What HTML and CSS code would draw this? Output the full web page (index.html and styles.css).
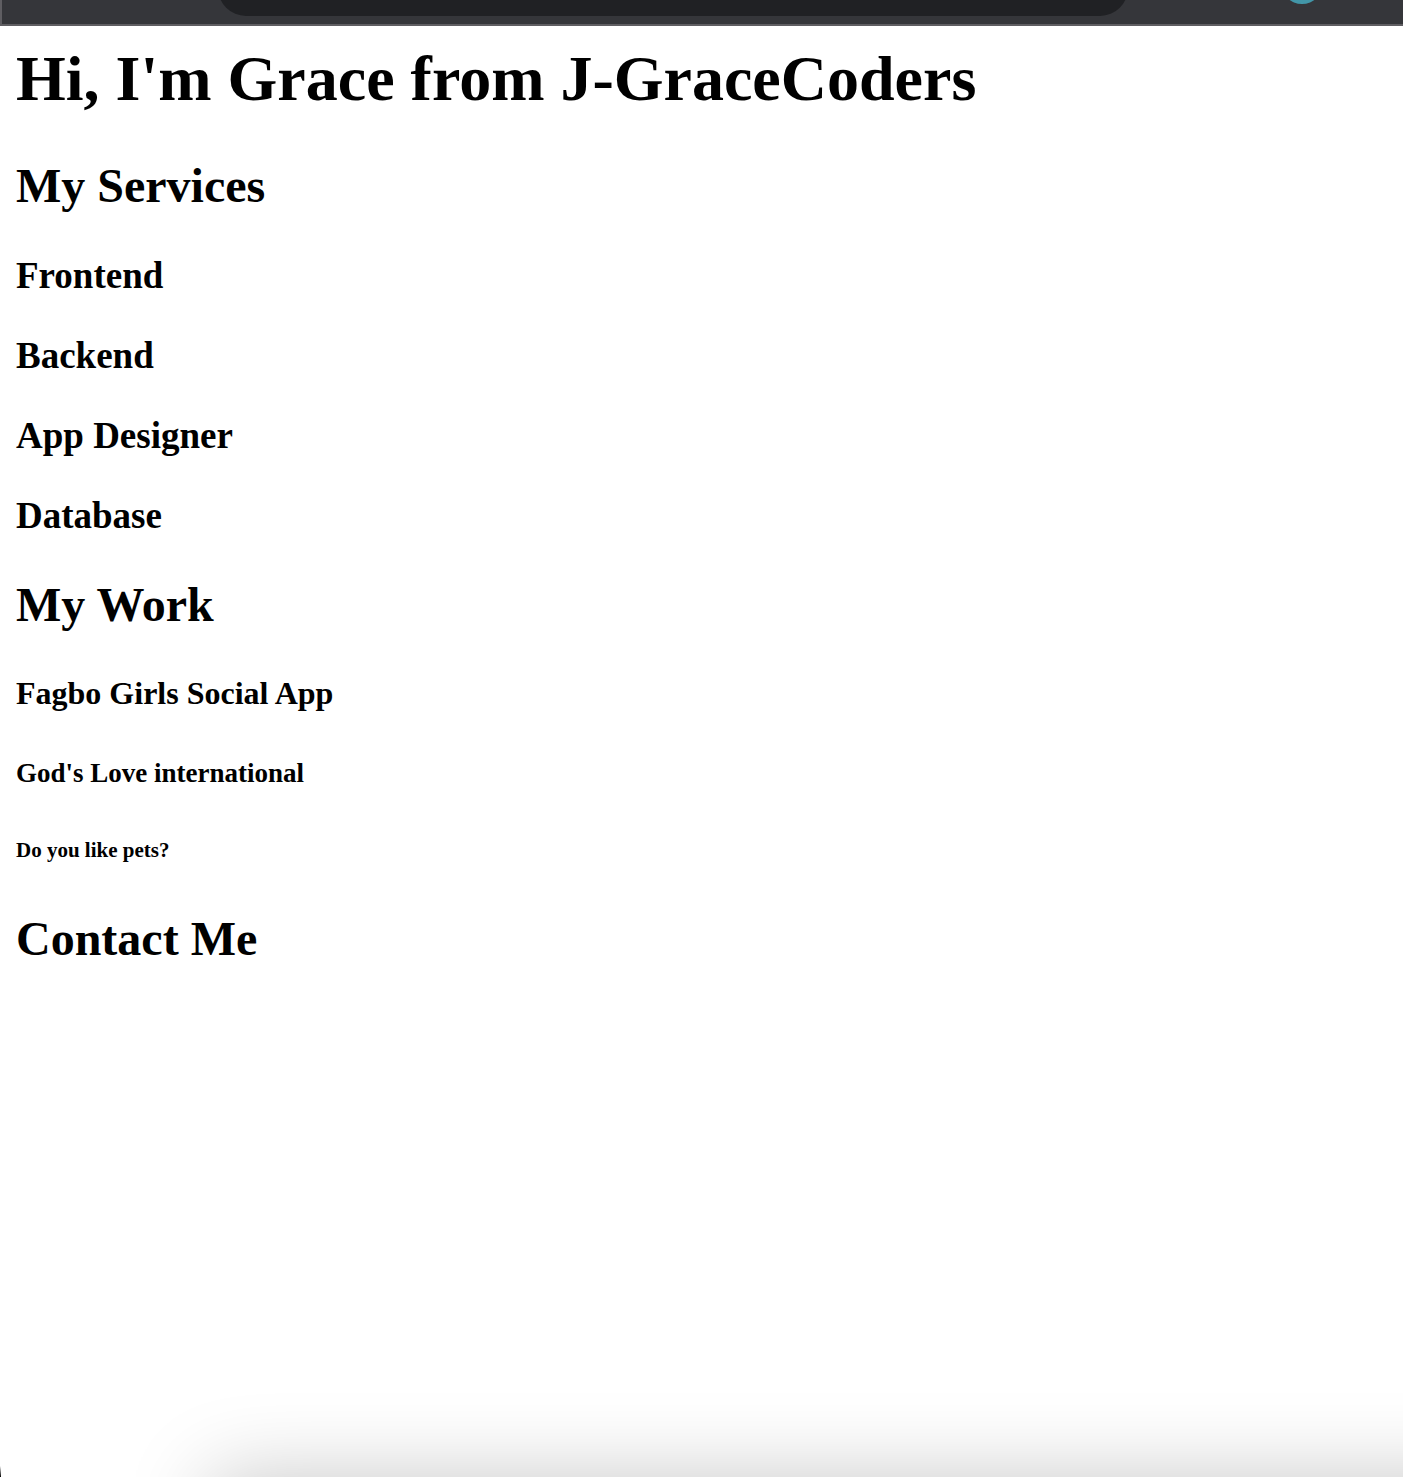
FILE: index.html
```html
<!DOCTYPE html>
<html lang="en">
<head>
<meta charset="utf-8">
<title>J-GraceCoders</title>
<link rel="stylesheet" href="styles.css">
</head>
<body>
<header class="toolbar">
  <div class="address-bar"></div>
  <div class="avatar"></div>
</header>
<main class="content">
  <h1>Hi, I'm Grace from J-GraceCoders</h1>
  <h2>My Services</h2>
  <h3>Frontend</h3>
  <h3>Backend</h3>
  <h3>App Designer</h3>
  <h3>Database</h3>
  <h2>My Work</h2>
  <h4>Fagbo Girls Social App</h4>
  <h5>God's Love international</h5>
  <h6>Do you like pets?</h6>
  <h2>Contact Me</h2>
</main>
<div class="bottom-shade"><div class="shadow-caster"></div></div>
</body>
</html>
```
FILE: styles.css
```css
* { box-sizing: border-box; }

body {
  margin: 0;
  min-height: 100vh;
  display: flex;
  flex-direction: column;
  background: #fff;
  color: #000;
  font-family: "Liberation Serif", "Times New Roman", serif;
}

.toolbar {
  display: flex;
  align-items: flex-end;
  height: 26px;
  padding: 0 80px 0 216px;
  overflow: hidden;
  background: #35363a;
  border-bottom: 2px solid #5f5e62;
  border-left: 2px solid #5f5e62;
}

.address-bar {
  flex: 1;
  height: 56px;
  margin-bottom: 8px;
  border-radius: 28px;
  background: #202124;
}

.avatar {
  width: 42px;
  height: 42px;
  margin-left: 153px;
  margin-bottom: 20px;
  border-radius: 50%;
  background: #4296a8;
}

.content {
  flex: 1;
  padding: 16px;
}

h1 { font-size: 64px; line-height: 74px; margin: 0 0 43px; }
h2 { font-size: 48px; line-height: 54px; margin: 41px 0; }
h3 { font-size: 37px; line-height: 43px; margin: 37px 0; }
h4 { font-size: 32px; line-height: 36px; margin: 43px 0; }
h5 { font-size: 27px; line-height: 30px; margin: 47px 0; }
h6 { font-size: 21px; line-height: 24px; margin: 50px 0; }

/* Soft shadow rising from below the lower edge, with a dark window corner */
.bottom-shade {
  height: 100px;
  padding: 112px 0 0 210px;
  overflow: hidden;
  background: linear-gradient(to bottom, transparent, #000) left bottom / 1px 11px no-repeat;
}

.shadow-caster {
  height: 200px;
  margin-right: -200px;
  box-shadow: 0 0 84px rgba(0, 0, 0, 0.22);
}
```
